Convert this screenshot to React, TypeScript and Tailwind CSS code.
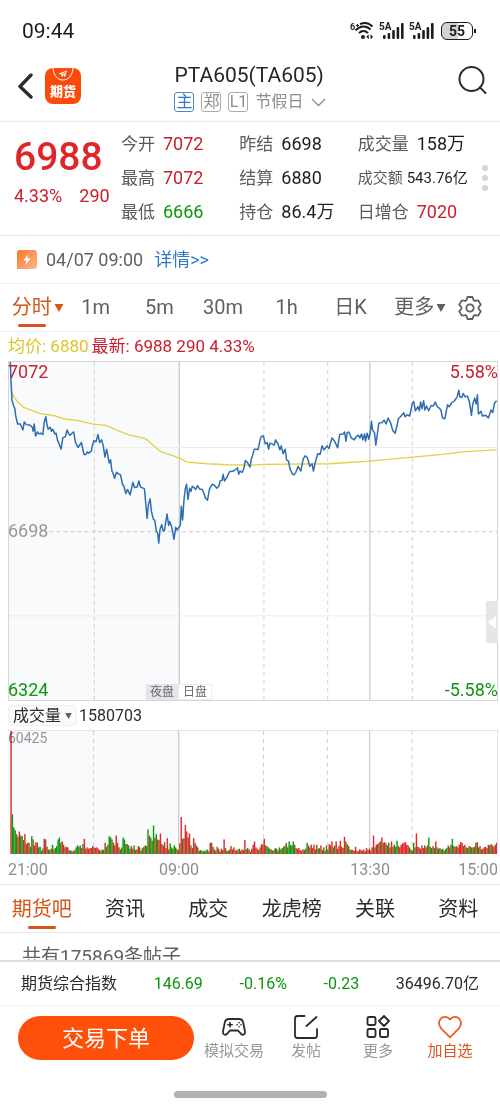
import React, {useState} from 'react'

type Quote = {
    label: string
    value: string
    color?: string
    small?: boolean
}

const RED = "text-[#c9202f]";
const GREEN = "text-[#0d960d]";

const quotes: Quote[] = [
    {label: "今开", value: "7072", color: RED},
    {label: "昨结", value: "6698"},
    {label: "成交量", value: "158万"},
    {label: "最高", value: "7072", color: RED},
    {label: "结算", value: "6880"},
    {label: "成交额", value: "543.76亿", small: true},
    {label: "最低", value: "6666", color: GREEN},
    {label: "持仓", value: "86.4万"},
    {label: "日增仓", value: "7020", color: RED},
];

const periods = ["分时", "1m", "5m", "30m", "1h", "日K", "更多"];
const sections = ["期货吧", "资讯", "成交", "龙虎榜", "关联", "资料"];

// x of the session and hour lines, in chart units
const dashedLines = [281, 792, 984, 1239];
const solidLines = [537, 1111];

const price = `28,-57 30,0 33,58 38,75 42,85 44,105 50,130 58,130 66,148 70,124 76,132 88,134 94,140 97,152 100,130 104,166
110,154 114,160 120,158 126,162 130,125 135,108 138,130 142,146 148,140 152,152 156,146 162,160 166,158 170,178 181,206
186,172 194,168 199,148 204,160 208,164 214,158 219,154 224,185 232,201 242,186 250,222 256,222 260,214 264,218 272,212
276,192 280,180 286,184 292,162 297,186 303,178 308,196 313,230 318,206 326,248 330,238 334,272 338,280 342,294 348,276
356,282 360,284 366,312 370,318 376,340 381,328 389,344 397,306 402,322 410,320 415,302 420,320 432,326 436,370 440,415
444,374 449,356 453,394 459,418 463,420 468,454 472,460 475,490 479,448 484,434 488,452 492,452 500,402 505,436 508,424
514,440 521,478 526,442 530,450 540,436 543,378 547,420 551,360 555,326 559,312 563,358 568,324 572,334 576,318 582,322
586,328 592,316 598,326 606,328 610,336 616,354 622,360 628,326 636,312 642,314 650,324 656,318 660,302 666,300 669,282
673,302 680,292 688,274 700,272 706,268 712,262 716,282 720,272 726,276 731,266 736,240 742,246 750,260 754,236 758,224
763,206 769,206 774,208 780,180 784,168 790,166 796,190 802,186 806,206 810,188 816,190 823,194 827,178 834,190 840,208
844,196 850,220 856,206 860,238 866,242 870,264 877,280 882,284 888,276 895,258 903,272 910,236 916,226 923,232 930,258
937,250 941,272 946,248 954,220 961,222 967,196 973,208 982,196 988,204 997,172 1006,184 1014,202 1020,162 1030,160
1035,154 1039,182 1043,156 1048,154 1055,172 1064,178 1070,168 1076,164 1081,172 1086,160 1090,178 1095,160 1098,182
1103,158 1108,176 1112,156 1116,122 1119,148 1125,156 1129,194 1138,128 1148,126 1154,118 1160,130 1166,112 1174,128
1180,150 1187,158 1194,130 1197,114 1205,106 1213,96 1217,108 1223,102 1231,106 1239,68 1243,62 1248,90 1256,78 1260,90
1264,64 1268,84 1273,60 1277,88 1282,76 1288,90 1296,74 1302,76 1308,64 1314,78 1320,82 1325,88 1330,112 1337,114
1345,72 1350,78 1358,66 1366,60 1374,48 1379,28 1382,48 1388,50 1392,38 1398,48 1405,46 1411,64 1417,104 1421,70
1427,52 1431,70 1435,42 1438,100 1446,92 1450,106 1460,104 1468,112 1476,88 1481,96 1487,66 1493,60`;

const average = `33,36 40,50 52,66 68,80 90,88 115,98 165,106 190,115 230,119 275,130 316,134 350,149 385,163 435,174 480,213
515,225 537,233 560,245 620,250 680,253 760,254 790,252 990,250 1110,242 1240,230 1330,222 1390,214 1493,208`;

// one bar per minute: height and r (up), g (down) or b (flat)
const volume = `372r 120g 80g 72g 60b 52g 68r 56g 54b 42g 60r 30r 34b 34r 22g 54g 44b 26r 36b 34r 20g 22g 10g 16b 46r 44b
22r 14g 12b 16b 28g 14r 18g 24g 44g 50g 34g 38r 28r 20b 22r 20r 12g 10b 10r 8b 12g 20g 26g 22b 26g 18b 30b 46r 16b 20r
16r 18r 18b 24r 20r 18b 20r 16r 12r 10b 14g 12g 34b 22b 28b 54g 50g 44b 34b 26r 56r 34b 20r 14g 20b 50g 44g 30g 30b 26g
16g 24r 16b 26g 12b 14r 24b 20r 10g 18b 22g 26b 24g 74g 56b 50g 40b 86g 50b 60g 44b 42r 62r 30b 26r 36b 18r 48r 14b 32g
20g 16b 26g 20g 14b 12b 32b 112r 46b 48b 88r 68r 50b 62r 26b 18b 48r 34b 26r 20b 10g 12b 10g 8g 10b 10g 14g 8b 34r 34b
22b 14r 10g 22b 16b 8r 16r 12b 44r 18b 10g 10b 14b 24r 14r 20b 12r 10b 14r 16g 10r 14r 12b 42r 14r 18g 14b 8r 16r 28r
38r 20b 16r 12b 20b 30r 28r 46r 26b 24g 20b 16g 14b 10b 12g 18b 16g 10b 20g 14b 18g 22b 26g 34b 20g 38g 28g 26g 38g
28b 18b 16r 18r 12b 10r 14r 12g 16b 34g 26b 20b 28r 18b 28r 14r 28b 16b 18g 26r 12b 20b 10g 26b 14g 30r 26b 38r 20g 26b
38r 16r 24b 40r 22b 18r 52r 38b 30g 24b 14r 12g 12b 10r 22r 10b 8r 14r 12b 10r 14r 8b 18r 12b 16r 10r 20b 56r 20b 28r
30b 34r 38b 50r 34b 36r 32b 26g 34b 20r 38r 22b 28g 22b 40g 24b 20r 28r 32r 34r 36r 28r 26b 20r 14g 10b 34g 20b
62r 22b 20r 16r 26b 18r 26b 20r 26b 50g 22b 18g 24b 18g 38r 20b 16b 18g 14b 16g 10g 14b 18g 26b 20r 28g 46g 24b 22r
24b 20r 28r 36r 34r 24b 28r 20b 18g 24b 22b 20g 20b 22g 34r 36b 20g 24r 14b 16r 20b 22r 18b 28r 26b 30g 26r 22b 28r 34r`
    .split(/\s+/)
    .map((bar) => ({height: parseInt(bar), kind: bar.slice(-1)}));

const barColors: Record<string, string> = {r: "#e0282e", g: "#12980f", b: "#8a5a1c"};

function GridLines({top, bottom}: {top: number, bottom: number}) {
    return (
        <>
            <rect x={24} y={top} width={513} height={bottom - top} fill="#f8fafc" />
            {dashedLines.map((x) => (
                <line key={x} x1={x} x2={x} y1={top} y2={bottom} stroke="#cfcfd2" strokeWidth={3} strokeDasharray="12 12" />
            ))}
            {solidLines.map((x) => (
                <line key={x} x1={x} x2={x} y1={top} y2={bottom} stroke="#cdcdd0" strokeWidth={4} />
            ))}
        </>
    )
}

function PriceChart() {
    return (
        <svg viewBox="24 -57 1470 1020" preserveAspectRatio="none" className="block w-full h-85 border border-[#d6d6da]">
            <GridLines top={-57} bottom={963} />
            <line x1={24} x2={1494} y1={201} y2={201} stroke="#ececee" strokeWidth={3} />
            <line x1={24} x2={1494} y1={709} y2={709} stroke="#ececee" strokeWidth={3} />
            <line x1={146} x2={1494} y1={455} y2={455} stroke="#c9c9cc" strokeWidth={3} strokeDasharray="12 9" />
            <polyline points={average} fill="none" stroke="#e5cf45" strokeWidth={4} strokeLinejoin="round" />
            <polyline points={price} fill="none" stroke="#2f6db1" strokeWidth={4.5} strokeLinejoin="round" />
        </svg>
    )
}

function VolumeChart() {
    return (
        <svg viewBox="24 0 1470 372" preserveAspectRatio="none" className="block w-full h-31 border-t border-r border-[#e4e4e7]">
            <GridLines top={0} bottom={372} />
            {volume.map((bar, i) => (
                <rect key={i} x={31 + i * 1464 / volume.length} y={372 - bar.height} width={4.3} height={bar.height} fill={barColors[bar.kind]} />
            ))}
        </svg>
    )
}

function Signal() {
    return (
        <svg width="26" height="20" viewBox="0 0 26 20" fill="#1c1c1e">
            <text x="0" y="9" fontSize="10" fontWeight="700">5A</text>
            <rect x="4" y="14" width="2.6" height="4" rx="1" />
            <rect x="8.6" y="12" width="2.6" height="6" rx="1" />
            <rect x="13.2" y="9" width="2.6" height="9" rx="1" />
            <rect x="17.6" y="6" width="2.6" height="12" rx="1" />
            <rect x="22" y="2" width="2.6" height="16" rx="1" />
        </svg>
    )
}

function StatusBar() {
    return (
        <div className="flex items-center justify-between pt-4 pb-4 pl-[22px] pr-[27px] text-[#1c1c1e]">
            <span className="text-[21px] leading-[30px]">09:44</span>
            <div className="flex items-center gap-1">
                <svg width="25" height="20" viewBox="0 0 25 20" fill="none" stroke="#1c1c1e" strokeWidth="2">
                    <text x="0" y="9" fontSize="9" fontWeight="700" fill="#1c1c1e" stroke="none">6</text>
                    <path d="M6 4.5h3M7.5 3v3" strokeWidth="1" />
                    <path d="M10 3.2C15 .8 19.500 2.500 22.500 5.500M5.500 9.300C10 4.300 16.500 4.300 20.500 8.500M9 12.200C11.500 9.400 15.500 9.400 18 12.200" />
                    <circle cx="13" cy="16" r="2" fill="#1c1c1e" stroke="none" />
                    <path d="M18.500 13.800 16.500 15.800l2 2zM20.800 13.800l2 2-2 2z" fill="#1c1c1e" strokeWidth=".5" />
                </svg>
                <Signal />
                <Signal />
                <div className="relative ml-0.5 w-8 h-[18px] rounded-md border-[1.5px] border-[#1c1c1e] bg-linear-to-r from-[#d2d2d2] from-55% to-white to-55% text-center text-sm leading-4 font-bold">
                    55
                    <span className="absolute -right-1 top-1.5 w-0.5 h-1 bg-[#1c1c1e]" />
                </div>
            </div>
        </div>
    )
}

function Header() {
    return (
        <header className="grid grid-cols-[1fr_auto_1fr] items-start pb-[9px] px-3 border-b border-[#ececec]">
            <div className="flex items-center gap-3 pl-1.5 pt-1.5">
                <button aria-label="返回" className="cursor-pointer">
                    <svg width="15" height="26" viewBox="0 0 15 26" fill="none" stroke="#2d2d2f" strokeWidth="3.4" strokeLinecap="round" strokeLinejoin="round">
                        <path d="M13 2 2 13.500 13 24" />
                    </svg>
                </button>
                <a href="#" className="relative flex items-end justify-center w-9 h-9 rounded-lg bg-[#fb4a0a] text-white text-[13px] leading-6 font-black">
                    <svg className="absolute top-0 left-1/2 -translate-x-1/2" width="22" height="13" viewBox="0 0 22 13" fill="none">
                        <path d="M1 0C1.500 7.500 5.500 12 11 12S20.500 7.500 21 0" stroke="#fff" strokeWidth="1" />
                        <path d="M6.500 5.500 15 2.500 13 9 11.200 7.200 10 9.200 9 6.500Z" fill="#fff" />
                        <path d="m9 6.500 4.500-2.200-2.300 2.900" stroke="#fb4a0a" strokeWidth=".6" />
                    </svg>
                    期货
                </a>
            </div>
            <div>
                <h1 className="text-[21px] leading-[26px] text-[#262628]">PTA605(TA605)</h1>
                <button className="flex items-center gap-[7px] mt-1 text-base leading-5 text-[#8d8d8f] whitespace-nowrap cursor-pointer">
                    <span className="w-5 h-5 flex items-center justify-center rounded-[3px] border border-[#4a8ad0] text-[#2f78c8]">主</span>
                    <span className="w-5 h-5 flex items-center justify-center rounded-[3px] border border-[#ababad]">郑</span>
                    <span className="w-5 h-5 flex items-center justify-center rounded-[3px] border border-[#ababad]">L1</span>
                    <span>节假日</span>
                    <svg width="15" height="9" viewBox="0 0 15 9" fill="none" stroke="#8d8d8f" strokeWidth="1.300">
                        <path d="m1 1 6.500 6.500L14 1" />
                    </svg>
                </button>
            </div>
            <button aria-label="搜索" className="justify-self-end pt-1 cursor-pointer">
                <svg width="30" height="30" viewBox="0 0 30 30" fill="none" stroke="#2d2d2f" strokeWidth="2">
                    <circle cx="13.500" cy="13" r="12" />
                    <path d="m22 21.500 5.500 5.500" strokeLinecap="round" />
                </svg>
            </button>
        </header>
    )
}

function QuotePanel() {
    return (
        <section className="relative grid grid-cols-[107px_1fr_1fr_1fr] pl-3.5 pr-6 pt-[5px] pb-1.5 border-b border-[#ececec]">
            <div className="row-span-3">
                <p className="pt-1.5 text-[39px] leading-12 font-medium text-[#e0262b]">6988</p>
                <p className={"flex gap-[17px] text-lg leading-[30px] " + RED}>
                    <span>4.33%</span>
                    <span>290</span>
                </p>
            </div>
            {quotes.map((quote) => (
                <p key={quote.label} className={(quote.small ? "text-[15px] gap-1" : "text-[17px] gap-2") + " flex items-center leading-[34px] whitespace-nowrap text-[#5b5b5d]"}>
                    {quote.label}
                    <span className={(quote.small ? "text-[15px] " : "text-lg leading-[34px] ") + (quote.color ?? "text-[#1f1f21]")}>{quote.value}</span>
                </p>
            ))}
            <button aria-label="更多行情" className="absolute right-3 top-[43px] flex flex-col gap-1 cursor-pointer">
                <span className="w-1.5 h-1.5 rounded-full bg-[#d5d5d5]" />
                <span className="w-1.5 h-1.5 rounded-full bg-[#d5d5d5]" />
                <span className="w-1.5 h-1.5 rounded-full bg-[#d5d5d5]" />
            </button>
        </section>
    )
}

function Arrow({className}: {className: string}) {
    return (
        <svg viewBox="0 0 10 9" className={className} fill="currentColor">
            <path d="M0 0h10L5 9z" />
        </svg>
    )
}

function PeriodTabs() {
    const [active, setActive] = useState("分时");

    return (
        <nav className="flex items-center border-b border-[#f0f0f0]">
            <div className="flex flex-1">
                {periods.map((period) => (
                    <button
                        key={period}
                        onClick={() => setActive(period)}
                        className={"flex-1 flex flex-col items-center text-xl cursor-pointer " + (period === active ? "text-[#d2561a]" : "text-[#606062]")}
                    >
                        <span className="relative pt-2 leading-[30px]">
                            {period}
                            {(period === "分时" || period === "更多") && <Arrow className="absolute left-full top-5 ml-0.5 w-2.5 h-2" />}
                        </span>
                        <span className={"mt-0.5 mb-1 w-7 h-[3px] rounded-full " + (period === active ? "bg-[#d2561a]" : "")} />
                    </button>
                ))}
            </div>
            <button aria-label="设置" className="pl-3 pr-[18px] cursor-pointer">
                <svg width="24" height="24" viewBox="-12 -12 24 24" fill="none" stroke="#606062" strokeWidth="1.800" strokeLinejoin="round">
                    <path d="M-2.500-11 2.500-11 3.600-7.800 4.950-7.020 8.280-7.670 10.780-3.340 8.550-.78 8.550.78 10.780 3.340 8.280 7.670 4.950 7.020 3.600 7.800 2.500 11-2.500 11-3.600 7.800-4.950 7.020-8.280 7.670-10.780 3.340-8.550.78-8.550-.78-10.780-3.340-8.280-7.670-4.950-7.020-3.600-7.800Z" />
                    <circle r="3.700" />
                </svg>
            </button>
        </nav>
    )
}

function Charts() {
    return (
        <section className="pl-2 pr-0.5">
            <p className="flex gap-[3px] text-[17px] leading-[29px]">
                <span className="text-[#dcc42c]">均价: 6880</span>
                <span className={RED}>最新: 6988 290 4.33%</span>
            </p>
            <div className="relative text-lg leading-[22px]">
                <PriceChart />
                <span className={"absolute left-0 top-0 " + RED}>7072</span>
                <span className={"absolute right-0 top-0 " + RED}>5.58%</span>
                <span className="absolute left-0 top-1/2 -translate-y-1/2 text-[#98989a]">6698</span>
                <span className={"absolute left-0 bottom-0 " + GREEN}>6324</span>
                <span className={"absolute right-0 bottom-0 " + GREEN}>-5.58%</span>
                <div className="absolute left-[34.9%] bottom-px -translate-x-1/2 flex text-xs leading-4 text-[#6a6a6e]">
                    <span className="px-1 bg-[#e4e5ec]">夜盘</span>
                    <span className="px-1 bg-white border border-[#ededf0] leading-[14px]">日盘</span>
                </div>
                <button aria-label="展开盘口" className="absolute right-0 top-60 flex items-center justify-center w-3 h-[42px] bg-[#e6e6e6] cursor-pointer">
                    <svg width="8" height="13" viewBox="0 0 8 13" fill="#fff">
                        <path d="M8 0v13L0 6.500z" />
                    </svg>
                </button>
            </div>
            <div className="flex items-center gap-0.5 py-1 text-base leading-[21px] text-[#2b2b2d]">
                <button className="flex items-center gap-1 px-1 rounded-sm border border-[#f0f0f2] bg-[#fafafb] leading-[19px] cursor-pointer">
                    成交量
                    <Arrow className="w-[7px] h-[6px] text-[#606062]" />
                </button>
                1580703
            </div>
            <div className="relative">
                <span className="absolute left-0 top-0 text-sm leading-4 text-[#98989a]">60425</span>
                <div className="relative mix-blend-multiply">
                    <VolumeChart />
                </div>
            </div>
            <div className="relative flex justify-between pt-0.5 text-base leading-7 text-[#8d8d8f]">
                <span>21:00</span>
                <span className="absolute left-[34.9%] -translate-x-1/2">09:00</span>
                <span className="absolute left-[73.900%] -translate-x-1/2">13:30</span>
                <span>15:00</span>
            </div>
        </section>
    )
}

function SectionTabs() {
    const [active, setActive] = useState("期货吧");

    return (
        <nav className="flex border-y border-[#ececec]">
            {sections.map((section) => (
                <button
                    key={section}
                    onClick={() => setActive(section)}
                    className={"flex-1 flex flex-col items-center text-xl leading-[30px] pt-[9px] cursor-pointer " + (section === active ? "text-[#d2561a]" : "text-[#2b2b2d]")}
                >
                    {section}
                    <span className={"mt-0.5 mb-[3px] w-7 h-[3px] rounded-full " + (section === active ? "bg-[#d2561a]" : "")} />
                </button>
            ))}
        </nav>
    )
}

function BottomBar() {
    return (
        <footer className="flex items-center pt-2.5 pl-[18px] pr-3.5">
            <button className="w-44 h-11 mr-1 rounded-full bg-[#ff500b] text-white text-[22px] cursor-pointer">交易下单</button>
            <div className="flex flex-1 text-[15px] leading-5 text-[#98989a] whitespace-nowrap">
                <button className="flex-1 flex flex-col items-center gap-0.5 cursor-pointer">
                    <svg width="26" height="24" viewBox="0 0 26 24" fill="none" stroke="#2b2b2d" strokeWidth="1.800" strokeLinejoin="round" strokeLinecap="round">
                        <path d="M8 4h10c2.500 0 3.600 1.200 4.200 3.500l1.800 9c.5 3-2.300 4.200-4 2.300L17 15.500H9l-3 3.300c-1.700 1.900-4.500.7-4-2.300L3.800 7.500C4.400 5.200 5.500 4 8 4Z" />
                        <path d="M9 7.500v4.400M6.800 9.700h4.400" strokeWidth="1.600" />
                        <path d="M18 7.600v.1M18 11.700v.1M16 9.700h.1M20 9.700h.1" strokeWidth="1.600" />
                    </svg>
                    模拟交易
                </button>
                <button className="flex-1 flex flex-col items-center gap-0.5 cursor-pointer">
                    <svg width="24" height="24" viewBox="0 0 24 24" fill="none" stroke="#2b2b2d" strokeWidth="1.800" strokeLinejoin="round" strokeLinecap="round">
                        <path d="M10.500 1H3.500C1.800 1 1 1.800 1 3.500v17c0 1.700.8 2.500 2.500 2.500h17c1.700 0 2.500-.8 2.500-2.500V14M12.500 11 22.500 2" />
                    </svg>
                    发帖
                </button>
                <button className="flex-1 flex flex-col items-center gap-0.5 cursor-pointer">
                    <svg width="24" height="24" viewBox="0 0 24 24" fill="none" stroke="#2b2b2d" strokeWidth="1.900" strokeLinejoin="round">
                        <rect x="1.500" y="2" width="8" height="8" rx="1.500" />
                        <rect x="1.500" y="14" width="8" height="8" rx="1.500" />
                        <rect x="14" y="14" width="8" height="8" rx="1.500" />
                        <path d="m18 1 5 5-5 5-5-5z" />
                    </svg>
                    更多
                </button>
                <button className="flex-1 flex flex-col items-center gap-0.5 text-[#dc541c] cursor-pointer">
                    <svg width="24" height="24" viewBox="0 0 24 24" fill="none" stroke="#ee5a24" strokeWidth="1.800" strokeLinejoin="round">
                        <path d="M12 4.600C9.500.9 4.500 1 2.300 4.300.2 7.600 1.200 11.300 3.500 13.800L12 22.300l8.500-8.500c2.300-2.500 3.300-6.200 1.200-9.500C19.500 1 14.500.9 12 4.600Z" />
                    </svg>
                    加自选
                </button>
            </div>
        </footer>
    )
}

function App() {
    return (
        <div className="min-h-screen bg-white font-[Roboto,'Noto_Sans_CJK_SC',sans-serif] overflow-hidden">
            <StatusBar />
            <Header />
            <QuotePanel />
            <div className="flex items-center pl-[17px] py-2 text-lg leading-[31px] text-[#606062] border-b border-[#f0f0f0]">
                <svg width="20" height="20" viewBox="0 0 20 20">
                    <defs>
                        <linearGradient id="flash" x1="0" y1="0" x2="1" y2="1">
                            <stop offset="0" stopColor="#f47a28" />
                            <stop offset="1" stopColor="#fbb98e" />
                        </linearGradient>
                    </defs>
                    <path d="M3 0h14a3 3 0 0 1 3 3v13a3 3 0 0 1-3 3H0V3a3 3 0 0 1 3-3Z" fill="url(#flash)" />
                    <path d="M11 4.500 6.500 10.500h3L8.500 15l5-6.500h-3.200z" fill="#fff" />
                </svg>
                <time className="ml-[9px]">04/07 09:00</time>
                <a href="#" className="ml-[11px] text-[#2f7ac6]">详情&gt;&gt;</a>
            </div>
            <PeriodTabs />
            <Charts />
            <SectionTabs />
            <div className="h-[27px] overflow-hidden pl-[22px] pt-2.5 text-[19px] leading-7 text-[#606062]">共有175869条帖子</div>
            <div className="flex justify-between border-t-2 border-[#dcdcdc] px-[21px] text-base leading-[43px] whitespace-nowrap text-[#2b2b2d] shadow-[0_1px_0_#f2f2f2]">
                <span>期货综合指数</span>
                <span className={GREEN}>146.69</span>
                <span className={GREEN}>-0.16%</span>
                <span className={GREEN}>-0.23</span>
                <span>36496.70亿</span>
            </div>
            <BottomBar />
            <div className="mx-auto mt-[30px] mb-2 w-[153px] h-[7px] rounded-full bg-[#b2b2b2]" />
        </div>
    )
}

export default App
